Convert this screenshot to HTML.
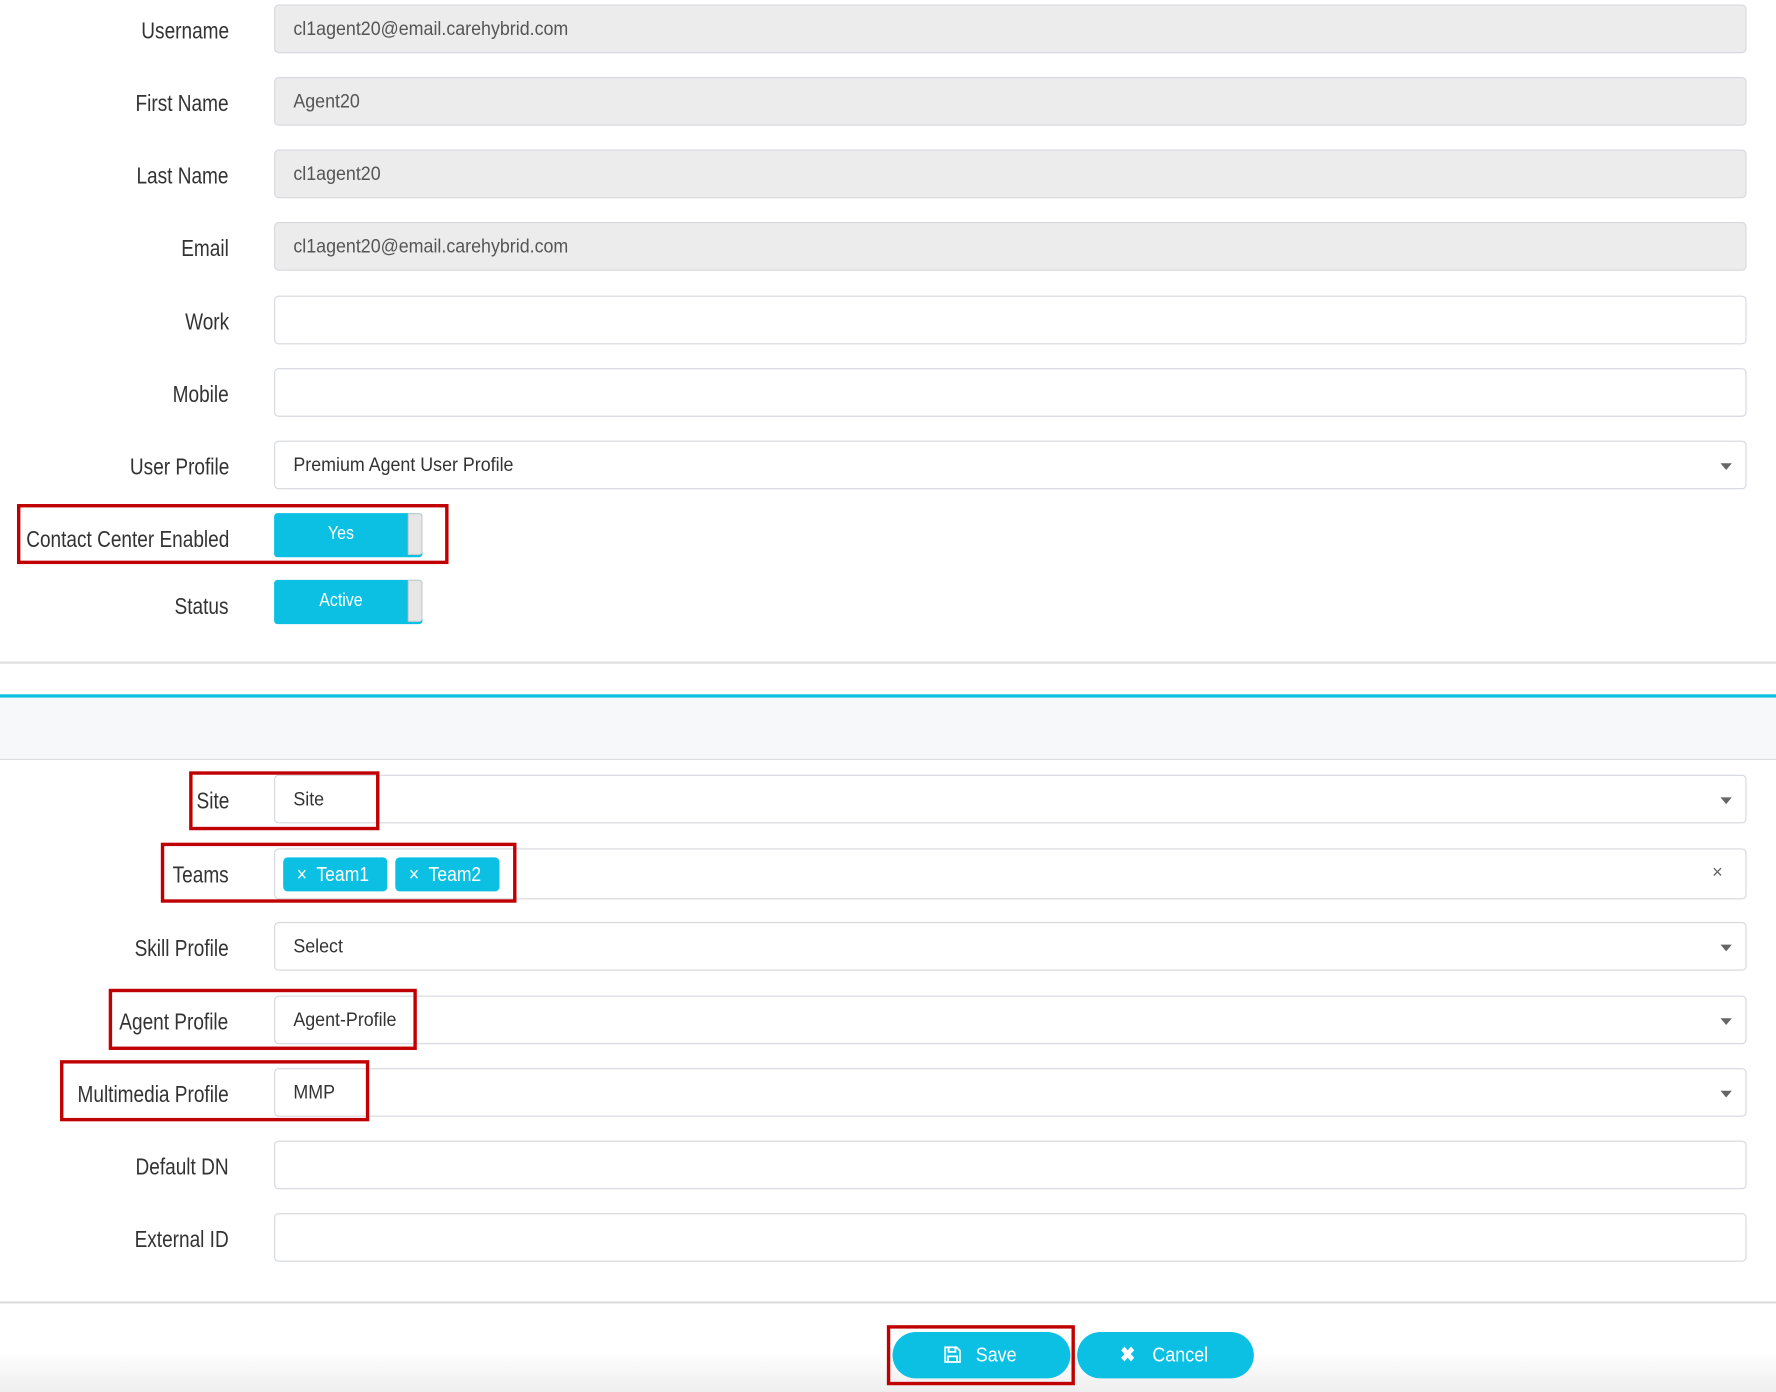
<!DOCTYPE html>
<html><head><meta charset="utf-8"><style>
html,body{margin:0;padding:0;background:#fff;overflow:hidden}
body{width:1776px;height:1392px;position:relative}
#w{position:absolute;left:0;top:0;width:1568px;height:1229px;transform:scale(1.13265);transform-origin:0 0;font-family:"Liberation Sans",sans-serif}
.l{position:absolute;right:1366px;font-size:20px;color:#333;line-height:44px;white-space:nowrap}
.l span{display:inline-block;transform:scaleX(0.84);transform-origin:right center}
.i{position:absolute;left:242px;width:1300px;height:43px;border:1px solid #d5d8de;border-radius:4px;background:#fff;box-sizing:border-box;font-size:17.5px;color:#555;line-height:41px;padding-left:16px;white-space:nowrap}
.i span.s{display:inline-block;transform:scaleX(0.9);transform-origin:left center}
.g{background:#ececec}
.dd:after{content:"";position:absolute;right:12px;top:19px;border-left:5px solid transparent;border-right:5px solid transparent;border-top:6px solid #666}
.sel{color:#333}
.t{position:absolute;left:242px;width:131px;height:39px;background:#0bc0e3;border-radius:3px;color:#fff;font-size:16px;line-height:37px}
.t span{position:absolute;left:0;width:118px;text-align:center;transform:scaleX(0.88)}
.t b{position:absolute;right:0;top:0;width:13px;height:37px;background:#e6e6e6;border:1px solid #ccc;border-radius:0 3px 3px 0;box-sizing:border-box}
.r{position:absolute;border:3px solid #c00000;box-sizing:border-box}
.tag{position:absolute;top:7px;height:30px;background:#0bc0e3;color:#fff;border-radius:4px;font-size:18px;line-height:30px;box-sizing:border-box;padding-left:12px;white-space:nowrap}
.tag span{display:inline-block;transform:scaleX(0.86);transform-origin:left center}
.btn{position:absolute;top:1176px;height:41px;border-radius:21px;background:#0bc0e3;color:#fff;font-size:18px;line-height:41px;text-align:center}
.btn span{display:inline-block;transform:scaleX(0.88)}
</style></head><body><div id="w">
<div class="l" style="top:6px"><span>Username</span></div><div class="i g" style="top:4px"><span class="s">cl1agent20@email.carehybrid.com</span></div>
<div class="l" style="top:70px"><span>First Name</span></div><div class="i g" style="top:68px"><span class="s">Agent20</span></div>
<div class="l" style="top:134px"><span>Last Name</span></div><div class="i g" style="top:132px"><span class="s">cl1agent20</span></div>
<div class="l" style="top:198px"><span>Email</span></div><div class="i g" style="top:196px"><span class="s">cl1agent20@email.carehybrid.com</span></div>
<div class="l" style="top:263px"><span>Work</span></div><div class="i" style="top:261px"></div>
<div class="l" style="top:327px"><span>Mobile</span></div><div class="i" style="top:325px"></div>
<div class="l" style="top:391px"><span>User Profile</span></div><div class="i dd sel" style="top:389px"><span class="s">Premium Agent User Profile</span></div>
<div class="l" style="top:455px"><span>Contact Center Enabled</span></div><div class="t" style="top:453px"><span>Yes</span><b></b></div>
<div class="r" style="left:15px;top:445px;width:381px;height:53px"></div>
<div class="l" style="top:514px"><span>Status</span></div><div class="t" style="top:512px"><span>Active</span><b></b></div>
<div style="position:absolute;left:0;top:584px;width:1568px;height:2px;background:#e0e0e0"></div>
<div style="position:absolute;left:0;top:613px;width:1568px;height:3px;background:#0bc0e3"></div>
<div style="position:absolute;left:0;top:616px;width:1568px;height:54px;background:#f7f8fa;border-bottom:1px solid #ddd"></div>
<div class="l" style="top:686px"><span>Site</span></div><div class="i dd sel" style="top:684px"><span class="s">Site</span></div>
<div class="r" style="left:167px;top:681px;width:168px;height:52px"></div>
<div class="l" style="top:751px"><span>Teams</span></div><div class="i" style="top:749px;height:45px"><div class="tag" style="left:7px;width:92px"><span>×&nbsp; Team1</span></div><div class="tag" style="left:106px;width:92px"><span>×&nbsp; Team2</span></div><span style="position:absolute;right:20px;top:0;color:#666;font-size:16px">×</span></div>
<div class="r" style="left:142px;top:744px;width:314px;height:53px"></div>
<div class="l" style="top:816px"><span>Skill Profile</span></div><div class="i dd sel" style="top:814px"><span class="s">Select</span></div>
<div class="l" style="top:881px"><span>Agent Profile</span></div><div class="i dd sel" style="top:879px"><span class="s">Agent-Profile</span></div>
<div class="r" style="left:96px;top:873px;width:272px;height:54px"></div>
<div class="l" style="top:945px"><span>Multimedia Profile</span></div><div class="i dd sel" style="top:943px"><span class="s">MMP</span></div>
<div class="r" style="left:53px;top:936px;width:273px;height:54px"></div>
<div class="l" style="top:1009px"><span>Default DN</span></div><div class="i" style="top:1007px"></div>
<div class="l" style="top:1073px"><span>External ID</span></div><div class="i" style="top:1071px"></div>
<div style="position:absolute;left:0;top:1149px;width:1568px;height:2px;background:#ddd"></div>
<div style="position:absolute;left:0;top:1151px;width:1568px;height:78px;background:linear-gradient(#fff 55%,#eee)"></div>
<div class="btn" style="left:788px;width:157px"><svg width="16" height="16" viewBox="0 0 16 16" style="vertical-align:-2px;margin-right:10px"><path d="M1.5 1.5h10l3 3v10h-13z M4.5 1.5v4h6v-4 M4 14.5v-5h8v5" fill="none" stroke="#fff" stroke-width="1.6"/></svg><span>Save</span></div>
<div class="r" style="left:783px;top:1170px;width:166px;height:53px"></div>
<div class="btn" style="left:951px;width:156px"><span style="font-weight:bold;font-size:18px;margin-right:10px">✖</span><span>Cancel</span></div>
</div></body></html>
